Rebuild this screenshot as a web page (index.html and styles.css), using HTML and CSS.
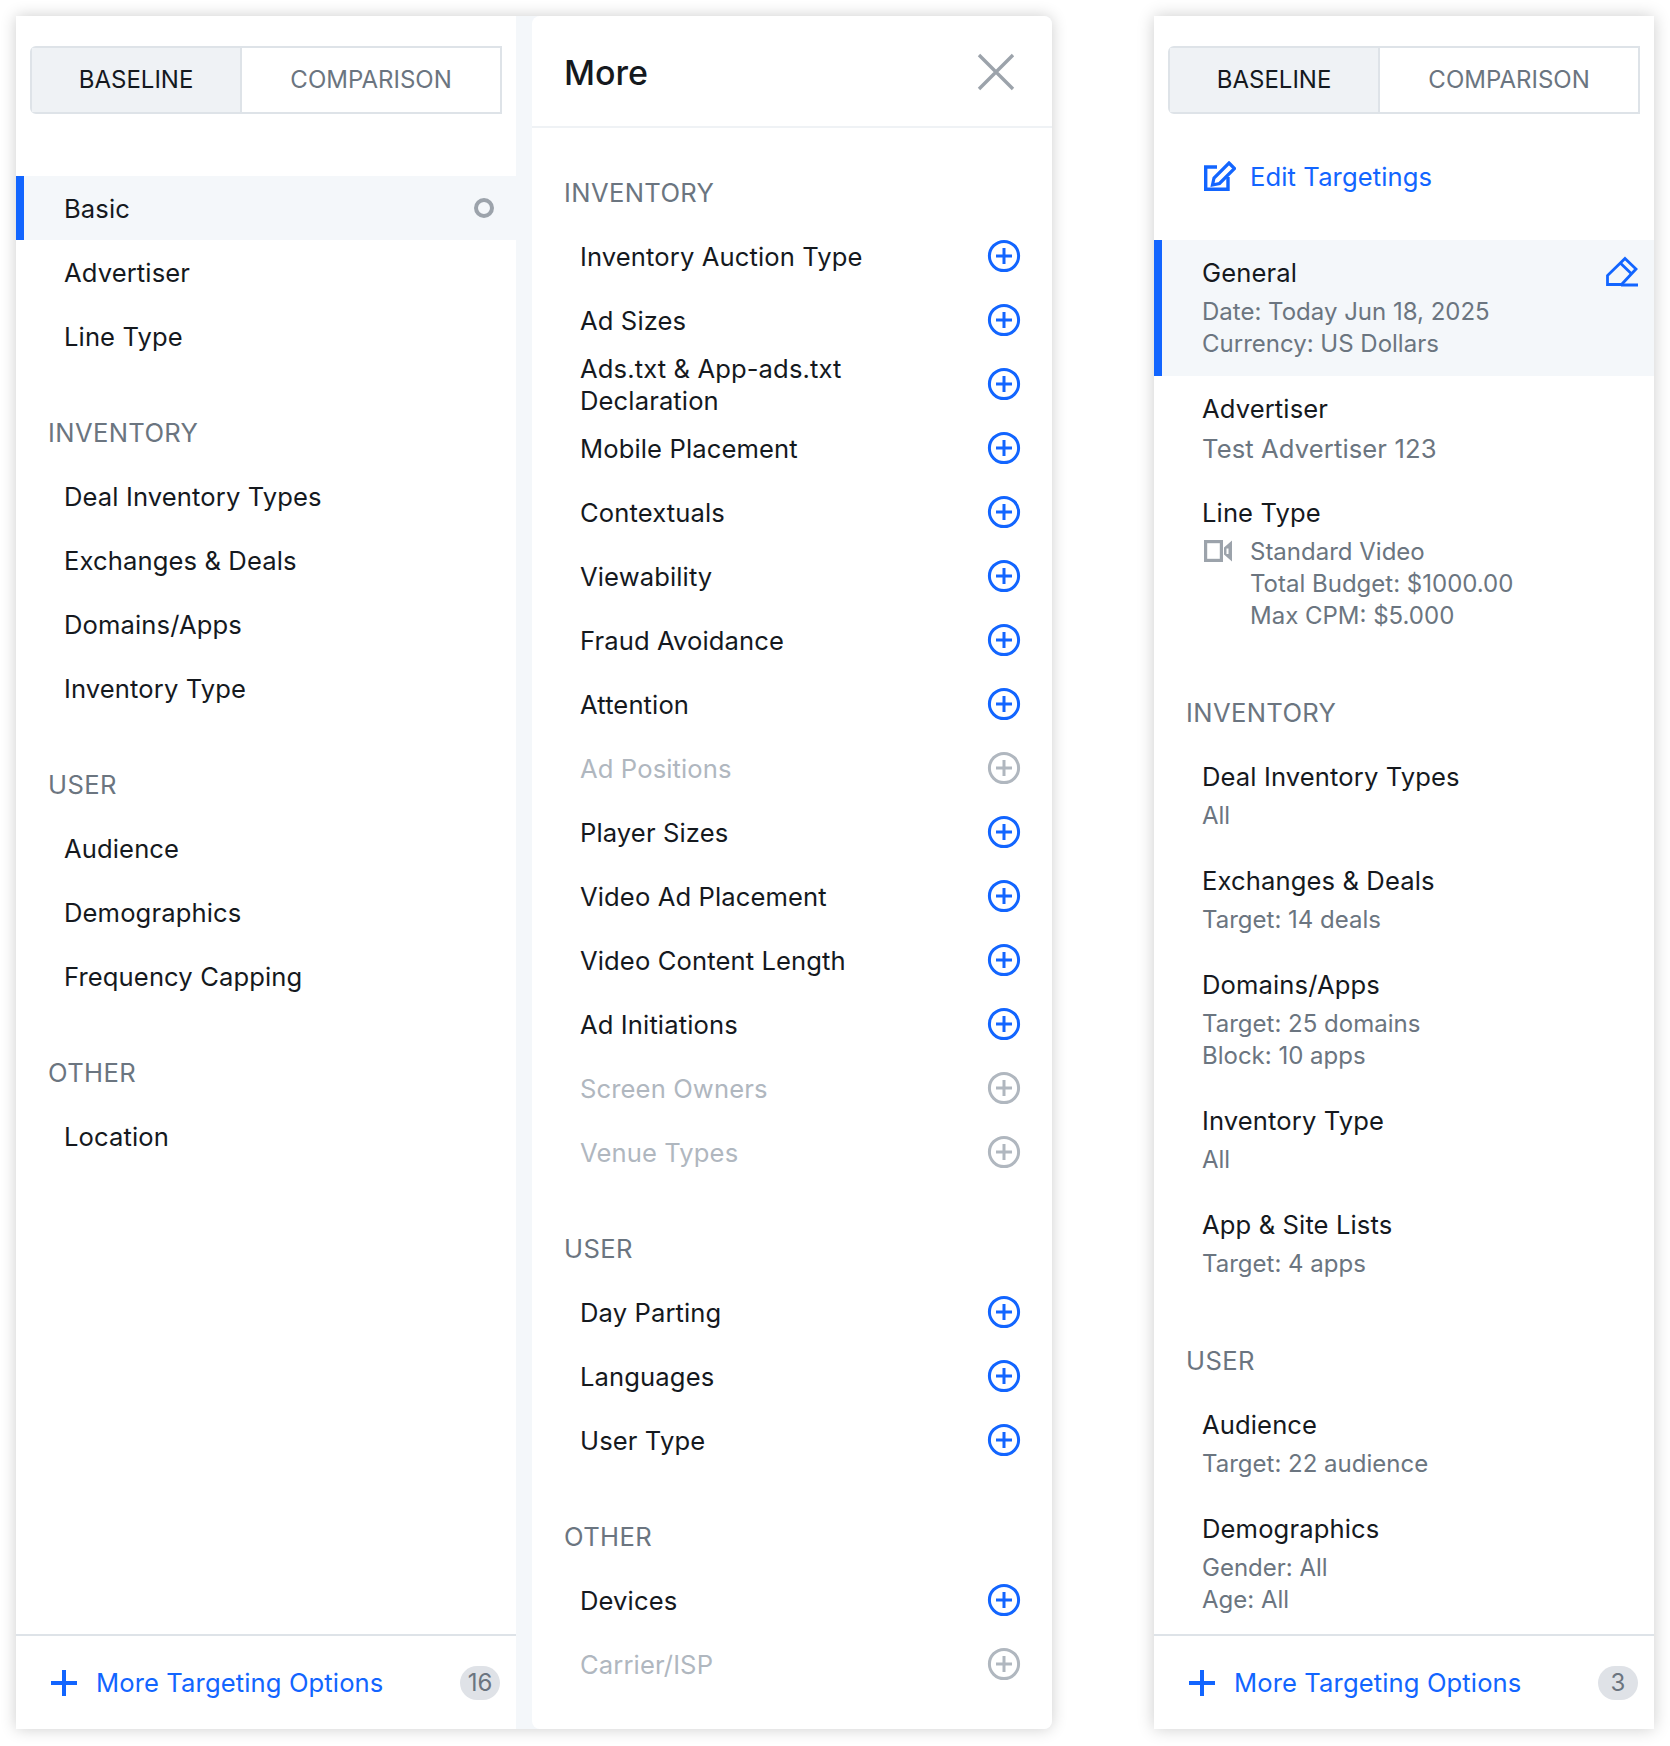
FILE: index.html
```html
<!DOCTYPE html>
<html lang="en">
<head>
    <meta charset="UTF-8">
    <title>Targeting</title>
    <link rel="stylesheet" href="styles.css">
</head>
<body>
    <!-- shared icons -->
    <svg class="sprite">
        <symbol id="icon-add" viewBox="0 0 34 34">
            <circle cx="17" cy="17" r="14.6" fill="none" stroke="currentColor" stroke-width="3"/>
            <path d="M17 9v16M9 17h16" fill="none" stroke="currentColor" stroke-width="3"/>
        </symbol>
        <symbol id="icon-plus" viewBox="0 0 26 26">
            <path d="M13 0v26M0 13h26" fill="none" stroke="currentColor" stroke-width="4"/>
        </symbol>
    </svg>

    <div class="page">
        <div class="builder">
            <aside class="panel">
                <div class="tabs">
                    <div class="tab active">BASELINE</div>
                    <div class="tab">COMPARISON</div>
                </div>
                <div class="panel-body first-list">
                    <div class="nav-row selected">Basic<span class="status-dot"></span></div>
                    <div class="nav-row">Advertiser</div>
                    <div class="nav-row">Line Type</div>
                    <h3 class="group-title">INVENTORY</h3>
                    <div class="nav-row">Deal Inventory Types</div>
                    <div class="nav-row">Exchanges &amp; Deals</div>
                    <div class="nav-row">Domains/Apps</div>
                    <div class="nav-row">Inventory Type</div>
                    <h3 class="group-title">USER</h3>
                    <div class="nav-row">Audience</div>
                    <div class="nav-row">Demographics</div>
                    <div class="nav-row">Frequency Capping</div>
                    <h3 class="group-title">OTHER</h3>
                    <div class="nav-row">Location</div>
                </div>
                <div class="panel-footer">
                    <svg class="footer-plus"><use href="#icon-plus"/></svg>
                    <span class="footer-label">More Targeting Options</span>
                    <span class="count">16</span>
                </div>
            </aside>

            <section class="more">
                <header class="more-head">
                    <h2>More</h2>
                    <svg class="close" viewBox="0 0 38 38"><path d="M2 2l34 34M36 2L2 36" fill="none" stroke="currentColor" stroke-width="3.4"/></svg>
                </header>
                <div class="more-body">
                    <h3 class="group-title">INVENTORY</h3>
                    <div class="add-row"><span>Inventory Auction Type</span><svg class="add"><use href="#icon-add"/></svg></div>
                    <div class="add-row"><span>Ad Sizes</span><svg class="add"><use href="#icon-add"/></svg></div>
                    <div class="add-row"><span>Ads.txt &amp; App-ads.txt<br>Declaration</span><svg class="add"><use href="#icon-add"/></svg></div>
                    <div class="add-row"><span>Mobile Placement</span><svg class="add"><use href="#icon-add"/></svg></div>
                    <div class="add-row"><span>Contextuals</span><svg class="add"><use href="#icon-add"/></svg></div>
                    <div class="add-row"><span>Viewability</span><svg class="add"><use href="#icon-add"/></svg></div>
                    <div class="add-row"><span>Fraud Avoidance</span><svg class="add"><use href="#icon-add"/></svg></div>
                    <div class="add-row"><span>Attention</span><svg class="add"><use href="#icon-add"/></svg></div>
                    <div class="add-row disabled"><span>Ad Positions</span><svg class="add"><use href="#icon-add"/></svg></div>
                    <div class="add-row"><span>Player Sizes</span><svg class="add"><use href="#icon-add"/></svg></div>
                    <div class="add-row"><span>Video Ad Placement</span><svg class="add"><use href="#icon-add"/></svg></div>
                    <div class="add-row"><span>Video Content Length</span><svg class="add"><use href="#icon-add"/></svg></div>
                    <div class="add-row"><span>Ad Initiations</span><svg class="add"><use href="#icon-add"/></svg></div>
                    <div class="add-row disabled"><span>Screen Owners</span><svg class="add"><use href="#icon-add"/></svg></div>
                    <div class="add-row disabled"><span>Venue Types</span><svg class="add"><use href="#icon-add"/></svg></div>
                    <h3 class="group-title">USER</h3>
                    <div class="add-row"><span>Day Parting</span><svg class="add"><use href="#icon-add"/></svg></div>
                    <div class="add-row"><span>Languages</span><svg class="add"><use href="#icon-add"/></svg></div>
                    <div class="add-row"><span>User Type</span><svg class="add"><use href="#icon-add"/></svg></div>
                    <h3 class="group-title">OTHER</h3>
                    <div class="add-row"><span>Devices</span><svg class="add"><use href="#icon-add"/></svg></div>
                    <div class="add-row disabled"><span>Carrier/ISP</span><svg class="add"><use href="#icon-add"/></svg></div>
                </div>
            </section>
        </div>

        <aside class="panel summary">
            <div class="tabs">
                <div class="tab active">BASELINE</div>
                <div class="tab">COMPARISON</div>
            </div>
            <div class="edit-link">
                <svg class="edit-icon" viewBox="0 0 32 32">
                    <path d="M13 6H1.700v22.300h22.300V16" fill="none" stroke="currentColor" stroke-width="3.400"/>
                    <path d="M25 2l5.500 5.500L15.500 22.500l-7 1.500 1.500-7z" fill="none" stroke="currentColor" stroke-width="3.200"/>
                </svg>
                Edit Targetings
            </div>
            <div class="panel-body">
                <div class="item selected">
                    <div class="item-title">General</div>
                    <div class="item-sub">Date: Today Jun 18, 2025<br>Currency: US Dollars</div>
                    <svg class="eraser" viewBox="0 0 32 32">
                        <path d="M19 2.500L30 13 15.500 28.500H1.500V19.500z" fill="none" stroke="currentColor" stroke-width="2.800"/>
                        <path d="M14 6.700L25.700 18M15 29h17" fill="none" stroke="currentColor" stroke-width="2.800"/>
                    </svg>
                </div>
                <div class="item">
                    <div class="item-title">Advertiser</div>
                    <div class="item-value">Test Advertiser 123</div>
                </div>
                <div class="item">
                    <div class="item-title">Line Type</div>
                    <div class="item-sub with-icon">
                        <svg class="video" viewBox="0 0 28 22">
                            <rect x="1.600" y="1.600" width="15.800" height="18.800" fill="#fff" stroke="currentColor" stroke-width="3.200"/>
                            <path d="M20 7.500L28 .5v21L20 14.500zM22.500 8.500v5.500h2V8.500z" fill="currentColor" fill-rule="evenodd"/>
                        </svg>
                        <div>Standard Video<br>Total Budget: $1000.00<br>Max CPM: $5.000</div>
                    </div>
                </div>
                <h3 class="group-title">INVENTORY</h3>
                <div class="item">
                    <div class="item-title">Deal Inventory Types</div>
                    <div class="item-sub">All</div>
                </div>
                <div class="item">
                    <div class="item-title">Exchanges &amp; Deals</div>
                    <div class="item-sub">Target: 14 deals</div>
                </div>
                <div class="item">
                    <div class="item-title">Domains/Apps</div>
                    <div class="item-sub">Target: 25 domains<br>Block: 10 apps</div>
                </div>
                <div class="item">
                    <div class="item-title">Inventory Type</div>
                    <div class="item-sub">All</div>
                </div>
                <div class="item">
                    <div class="item-title">App &amp; Site Lists</div>
                    <div class="item-sub">Target: 4 apps</div>
                </div>
                <h3 class="group-title">USER</h3>
                <div class="item">
                    <div class="item-title">Audience</div>
                    <div class="item-sub">Target: 22 audience</div>
                </div>
                <div class="item">
                    <div class="item-title">Demographics</div>
                    <div class="item-sub">Gender: All<br>Age: All</div>
                </div>
            </div>
            <div class="panel-footer">
                <svg class="footer-plus"><use href="#icon-plus"/></svg>
                <span class="footer-label">More Targeting Options</span>
                <span class="count">3</span>
            </div>
        </aside>
    </div>
</body>
</html>
```

FILE: styles.css
```css
body {
    margin: 0;
    background: #fff;
    color: #15191e;
    font-family: Inter, "Noto Sans", sans-serif;
    font-size: 25.6px;
    letter-spacing: 0.11px;
    line-height: 32px;
}

.sprite {
    display: none;
}

.page {
    display: flex;
    gap: 102px;
    padding: 16px;
    height: 1746px;
    box-sizing: border-box;
}

.builder {
    display: flex;
    gap: 16px;
    width: 1036px;
    height: 1713px;
    background: #f4f7fa;
    box-shadow: 0 0 16px rgba(0, 0, 0, 0.2);
    border-radius: 0 8px 8px 0;
}

.panel {
    display: flex;
    flex-direction: column;
    width: 500px;
    height: 1713px;
    background: #fff;
}

.summary {
    box-shadow: 0 0 16px rgba(0, 0, 0, 0.2);
}

.tabs {
    display: flex;
    flex: none;
    height: 68px;
    margin: 30px 14px 0;
    box-sizing: border-box;
    border: 2px solid #dee3e8;
    border-radius: 6px 0 0 6px;
    font-size: 24px;
    letter-spacing: 0;
}

.tab {
    display: flex;
    align-items: center;
    justify-content: center;
    width: 259px;
    color: #6b7580;
}

.tab.active {
    width: 211px;
    box-sizing: border-box;
    border-right: 2px solid #dee3e8;
    background: #eff2f5;
    color: #15191e;
}

.panel-body {
    flex: 1;
    overflow: hidden;
}

.first-list {
    margin-top: 62px;
}

.group-title {
    height: 64px;
    margin: 32px 0 0 32px;
    color: #6b7580;
    font-size: 25.6px;
    font-weight: 400;
    letter-spacing: 0.36px;
    line-height: 64px;
}

.panel .group-title {
    line-height: 66px;
}

.nav-row {
    display: flex;
    align-items: center;
    justify-content: space-between;
    height: 64px;
    padding: 2px 22px 0 48px;
    box-sizing: border-box;
}

.nav-row.selected,
.item.selected {
    padding-left: 40px;
    border-left: 8px solid #1265ff;
    background: #f4f7fa;
}

.status-dot {
    width: 20px;
    height: 20px;
    margin-top: -2px;
    box-sizing: border-box;
    border: 4px solid #9ca3ab;
    border-radius: 50%;
}

.panel-footer {
    display: flex;
    flex: none;
    align-items: center;
    height: 95px;
    padding: 0 16px 0 35px;
    box-sizing: border-box;
    border-top: 2px solid #dee3e8;
    color: #1265ff;
}

.footer-plus {
    width: 26px;
    height: 26px;
    margin-right: 19px;
}

.footer-label {
    flex: 1;
}

.count {
    min-width: 40px;
    height: 34px;
    padding: 0 4px;
    box-sizing: border-box;
    border-radius: 17px;
    background: #dfe2e7;
    color: #6b7580;
    font-size: 24px;
    letter-spacing: 0;
    line-height: 34px;
    text-align: center;
}

.more {
    display: flex;
    flex-direction: column;
    width: 520px;
    border-radius: 8px;
    background: #fff;
}

.more-head {
    display: flex;
    flex: none;
    align-items: center;
    justify-content: space-between;
    height: 112px;
    padding: 0 37px 0 32px;
    box-sizing: border-box;
    border-bottom: 2px solid #eff2f5;
}

.more-head h2 {
    margin: 4px 0 0;
    font-size: 34px;
    font-weight: 500;
    letter-spacing: 0;
}

.close {
    width: 38px;
    height: 38px;
    margin-top: 2px;
    color: #9ca3ab;
}

.more-body {
    padding-top: 1px;
}

.add-row {
    display: flex;
    align-items: center;
    justify-content: space-between;
    height: 64px;
    padding: 0 31px 0 48px;
}

.add {
    width: 34px;
    height: 34px;
    margin-top: -2px;
    color: #1265ff;
}

.add-row.disabled {
    color: #b0b7bf;
}

.add-row.disabled .add {
    color: #b0b7bf;
}

.edit-link {
    display: flex;
    flex: none;
    align-items: center;
    gap: 14px;
    height: 126px;
    padding-left: 50px;
    box-sizing: border-box;
    color: #1265ff;
}

.edit-icon {
    width: 32px;
    height: 32px;
}

.item {
    position: relative;
    padding: 16px 16px 16px 48px;
}

.item-title {
    margin-bottom: 7px;
    padding-top: 1px;
}

.item-sub {
    color: #6b7580;
    font-size: 24px;
    letter-spacing: 0;
}

.item-value {
    color: #6b7580;
    padding-top: 1px;
    margin-bottom: -1px;
}

.with-icon {
    display: flex;
    gap: 18px;
}

.video {
    flex: none;
    width: 28px;
    height: 22px;
    margin: 4px 0 0 2px;
    color: #9ca3ab;
}

.eraser {
    position: absolute;
    top: 16px;
    right: 16px;
    width: 32px;
    height: 32px;
    color: #1265ff;
}
```
